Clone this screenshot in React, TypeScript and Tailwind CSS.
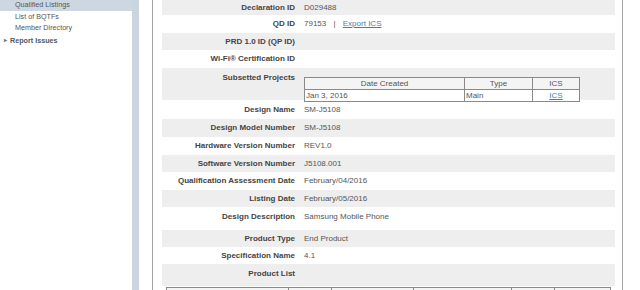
import React from 'react';

type Row = {
  label: string;
  value?: React.ReactNode;
  gray: boolean;
  h: string;
  top?: boolean;
};

const link = 'text-[#3d82b3] underline';

function SubsetTable() {
  return (
    <table className="w-[276px] border-collapse text-[8px] text-[#555] border border-[#7a7a7a] mt-[5px]">
      <thead>
        <tr className="bg-[#f4f4f4] h-[12px]">
          <th className="font-normal border border-[#8a8a8a] w-[160px] leading-[11px]">Date Created</th>
          <th className="font-normal border border-[#8a8a8a] w-[68px] leading-[11px]">Type</th>
          <th className="font-normal border border-[#8a8a8a] leading-[11px]">ICS</th>
        </tr>
      </thead>
      <tbody>
        <tr className="bg-white h-[12px]">
          <td className="border border-[#8a8a8a] pl-[1px] leading-[11px]">Jan 3, 2016</td>
          <td className="border border-[#8a8a8a] pl-[1px] leading-[11px]">Main</td>
          <td className="border border-[#8a8a8a] text-center leading-[11px]">
            <span className={link}>ICS</span>
          </td>
        </tr>
      </tbody>
    </table>
  );
}

const rows: Row[] = [
  { label: 'Declaration ID', value: 'D029488', gray: true, h: 'h-[15px]' },
  {
    label: 'QD ID',
    value: (
      <span>
        79153 <span className="px-[5px]">|</span> <span className={link}>Export ICS</span>
      </span>
    ),
    gray: false,
    h: 'h-[18px]',
  },
  { label: 'PRD 1.0 ID (QP ID)', gray: true, h: 'h-[17px]' },
  { label: 'Wi-Fi® Certification ID', gray: false, h: 'h-[18px]' },
  { label: 'Subsetted Projects', value: <SubsetTable />, gray: true, h: 'h-[32px]', top: true },
  { label: 'Design Name', value: 'SM-J5108', gray: false, h: 'h-[19px]' },
  { label: 'Design Model Number', value: 'SM-J5108', gray: true, h: 'h-[18px]' },
  { label: 'Hardware Version Number', value: 'REV1.0', gray: false, h: 'h-[18px]' },
  { label: 'Software Version Number', value: 'J5108.001', gray: true, h: 'h-[17px]' },
  { label: 'Qualification Assessment Date', value: 'February/04/2016', gray: false, h: 'h-[18px]' },
  { label: 'Listing Date', value: 'February/05/2016', gray: true, h: 'h-[17px]' },
  { label: 'Design Description', value: 'Samsung Mobile Phone', gray: false, h: 'h-[23px]', top: true },
  { label: 'Product Type', value: 'End Product', gray: true, h: 'h-[17px]' },
  { label: 'Specification Name', value: '4.1', gray: false, h: 'h-[17px]' },
  { label: 'Product List', gray: true, h: 'h-[22px]', top: true },
];

export default function App() {
  return (
    <div className="w-[640px] h-[290px] overflow-hidden bg-white flex font-['Liberation_Sans',Arial,sans-serif]">
      {/* left nav */}
      <div className="w-[132px] shrink-0 text-[7.2px] text-[#555]">
        <div className="h-[11px] leading-[10px] bg-[#cdd7e1] pl-[15px] text-[#4d5763]">Qualified Listings</div>
        <div className="h-[11px] leading-[11px] pl-[15px]">List of BQTFs</div>
        <div className="h-[11px] leading-[11px] pl-[15px]">Member Directory</div>
        <div className="h-[11px] leading-[11px] mt-[2px] pl-[4px] flex items-center gap-[3px] font-bold text-[#4f5966]">
          <span className="text-[6px] text-[#777]">▸</span>
          Report Issues
        </div>
      </div>
      <div className="w-[7px] shrink-0 bg-[#cad5e0]" />
      <div className="w-[13px] shrink-0" />

      {/* details panel */}
      <div className="w-[471px] shrink-0 border-x border-[#a3a3a3] pl-[9px] pr-[7px]">
        {rows.map((r) => (
          <div
            key={r.label}
            className={`grid grid-cols-[133px_1fr] gap-x-[9px] text-[8px] ${r.h} ${r.gray ? 'bg-[#eeeeee]' : ''} ${
              r.top ? 'items-start pt-[4px]' : 'items-center'
            }`}
          >
            <div className="text-right font-bold text-[#444] leading-[12px] whitespace-nowrap">{r.label}</div>
            <div className="text-[#555] leading-[12px]">{r.value}</div>
          </div>
        ))}
        <div className="px-[4px] pt-[1px]">
          <table className="w-[445px] border-collapse text-[8px] text-[#555] border border-[#7a7a7a]">
            <thead>
              <tr className="bg-[#f4f4f4] h-[12px]">
                <th className="font-normal border border-[#8a8a8a] w-[122px] leading-[11px]">Brand</th>
                <th className="font-normal border border-[#8a8a8a] w-[43px] leading-[11px]">Model</th>
                <th className="font-normal border border-[#8a8a8a] w-[82px] leading-[11px]">URL</th>
                <th className="font-normal border border-[#8a8a8a] w-[98px] leading-[11px]">Description</th>
                <th className="font-normal border border-[#8a8a8a] w-[43px] leading-[11px]">Subset ID</th>
                <th className="font-normal border border-[#8a8a8a] leading-[11px]">Publish Date</th>
              </tr>
            </thead>
          </table>
        </div>
      </div>
    </div>
  );
}
